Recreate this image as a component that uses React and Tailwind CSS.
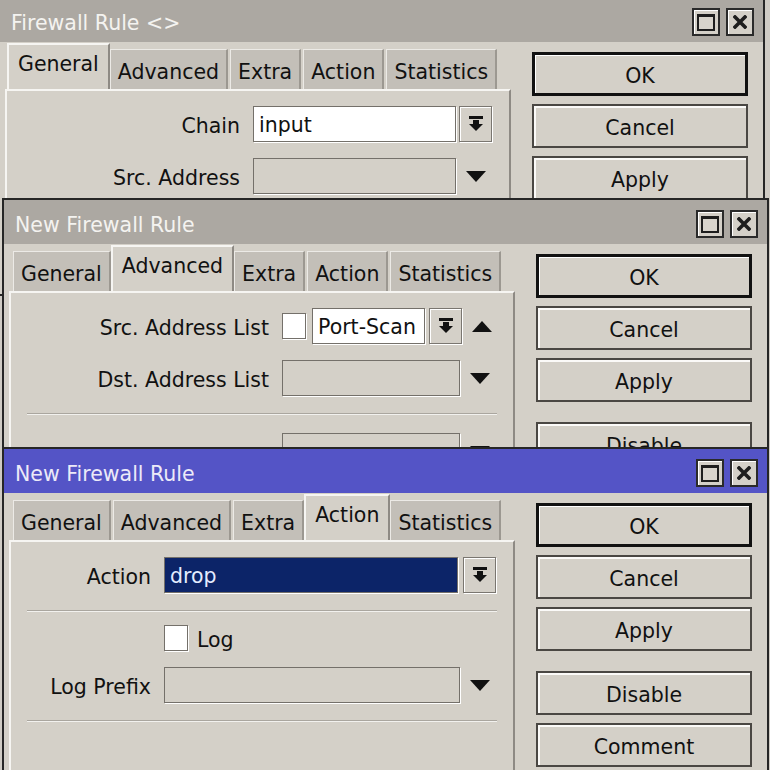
import React from "react";

function TitleButtons() {
  return (
    <div className="ml-auto flex gap-[6px] mt-[4px]">
      <div className="w-[28px] h-[28px] border-2 border-[#2a2a2a] bg-[#d4d0c8] shadow-[inset_1px_1px_0_#fff] flex items-center justify-center">
        <div className="w-[18px] h-[17px] border-2 border-t-[3px] border-[#1e1e1e] bg-[#d8d4cc]" />
      </div>
      <div className="w-[28px] h-[28px] border-2 border-[#2a2a2a] bg-[#d4d0c8] shadow-[inset_1px_1px_0_#fff] flex items-center justify-center">
        <svg width="14" height="14" viewBox="0 0 14 14">
          <path d="M2 2 L12 12 M12 2 L2 12" stroke="#1e1e1e" strokeWidth="3.6" strokeLinecap="square" />
        </svg>
      </div>
    </div>
  );
}

function Tab({ label, active }) {
  if (active) {
    return (
      <div className="relative z-10 -mx-[2px] h-[46px] px-[9px] pb-[5px] flex items-center bg-[#d4d0c8] border-t-2 border-l-2 border-[#f6f5f2] border-r-2 border-r-[#8e8a84] text-[#111]">
        {label}
      </div>
    );
  }
  return (
    <div className="h-[40px] px-[7px] pt-[5px] flex items-center bg-[#c3bfb8] border-t border-l border-[#eceae6] border-r-2 border-r-[#9c9891] text-[#111]">
      {label}
    </div>
  );
}

function DropBtn() {
  return (
    <div className="w-[33px] h-[36px] shrink-0 bg-[#d4d0c8] border border-[#7a7670] shadow-[inset_1px_1px_0_#fff,1px_1px_0_#fff] flex items-center justify-center">
      <svg width="14" height="16" viewBox="0 0 14 16">
        <rect x="0" y="0" width="14" height="3" fill="#111" />
        <rect x="4" y="4" width="6" height="5" fill="#111" />
        <polygon points="0,8 14,8 7,15" fill="#111" />
      </svg>
    </div>
  );
}

function Tri({ up }) {
  return (
    <div className="w-[33px] flex justify-center">
      <svg width="20" height="11" viewBox="0 0 20 11">
        {up ? (
          <polygon points="0,11 20,11 10,0" fill="#111" />
        ) : (
          <polygon points="0,0 20,0 10,11" fill="#111" />
        )}
      </svg>
    </div>
  );
}

function Row({ labelW, label, children, slot, className = "" }) {
  return (
    <div className={`flex items-center h-[36px] pr-[17px] ${className}`}>
      <div className={`${labelW} shrink-0 text-right whitespace-nowrap text-[#111] leading-[24px] pt-[4px]`}>{label}</div>
      <div className="ml-[13px] flex-1 flex items-center h-full">{children}</div>
      <div className="w-[36px] h-full shrink-0 flex items-center justify-end">{slot}</div>
    </div>
  );
}

function Field({ value, white, selected, className = "" }) {
  const bg = selected ? "bg-[#0c2468] text-[#e4ecff]" : white ? "bg-white text-[#111]" : "bg-[#d4d0c8]";
  return (
    <div className={`h-[36px] border border-[#74706a] shadow-[1px_1px_0_#fff] flex items-center px-[5px] pt-[3px] ${bg} ${className}`}>
      {value}
    </div>
  );
}

function Check() {
  return <div className="w-[24px] h-[26px] shrink-0 bg-white border border-[#74706a] shadow-[1px_1px_0_#fff]" />;
}

function Sep({ className = "" }) {
  return <div className={`ml-[16px] mr-[16px] h-[2px] border-t border-[#aaa69f] border-b border-b-[#f2f1ee] ${className}`} />;
}

function Btn({ label, primary, className = "" }) {
  return (
    <div
      className={`h-[44px] shrink-0 flex items-center justify-center pt-[4px] bg-[#d4d0c8] text-[#111] ${
        primary
          ? "border-[3px] border-[#111] shadow-[inset_1px_1px_0_#fff]"
          : "border-2 border-[#4a4743] shadow-[inset_2px_2px_0_#fbfaf8]"
      } ${className}`}
    >
      {label}
    </div>
  );
}

const TABS = ["General", "Advanced", "Extra", "Action", "Statistics"];

function Win({ pos, title, blue, activeTab, buttons, children }) {
  return (
    <div className={`absolute w-[767px] border-2 border-[#262626] bg-[#d4d0c8] overflow-hidden flex flex-col ${pos}`}>
      <div
        className={`h-[44px] shrink-0 flex items-center pl-[11px] pr-[9px] ${
          blue ? "bg-[#5454c6] text-[#eceaf8]" : "bg-[#aca8a2] text-[#f4f3f0]"
        }`}
      >
        <span className="pt-[7px]">{title}</span>
        <TitleButtons />
      </div>
      <div className="flex flex-1 pl-[5px]">
        <div className="w-[506px] flex flex-col">
          <div className="h-[47px] flex items-end pl-[4px] gap-[2px]">
            {TABS.map((t) => (
              <Tab key={t} label={t} active={t === activeTab} />
            ))}
          </div>
          <div className="flex-1 border-t-2 border-l-2 border-[#f6f5f2] border-r-2 border-r-[#8e8a84] pt-[15px] flex flex-col">
            {children}
          </div>
        </div>
        <div className="w-[216px] ml-[21px] pt-[10px] flex flex-col gap-[8px]">
          {buttons.map((b, i) => (
            <Btn key={b} label={b} primary={i === 0} className={b === "Disable" ? "mt-[12px]" : ""} />
          ))}
        </div>
      </div>
    </div>
  );
}

export default function App() {
  return (
    <div className="relative w-[770px] h-[770px] overflow-hidden bg-[#cfcbc4] font-['DejaVu_Sans',sans-serif] text-[20.5px] leading-none">
      <Win
        pos="left-[-2px] top-[-4px] h-[300px]"
        title="Firewall Rule <>"
        activeTab="General"
        buttons={["OK", "Cancel", "Apply", "Disable", "Comment"]}
      >
        <Row labelW="w-[233px]" label="Chain" slot={<DropBtn />}>
          <Field white value="input" className="flex-1" />
        </Row>
        <Row labelW="w-[233px]" label="Src. Address" className="mt-[16px]" slot={<Tri />}>
          <Field className="flex-1" />
        </Row>
        <Row labelW="w-[233px]" label="Dst. Address" className="mt-[16px]" slot={<Tri />}>
          <Field className="flex-1" />
        </Row>
      </Win>

      <Win
        pos="left-[2px] top-[198px] h-[320px]"
        title="New Firewall Rule"
        activeTab="Advanced"
        buttons={["OK", "Cancel", "Apply", "Disable", "Comment"]}
      >
        <Row labelW="w-[258px]" label="Src. Address List" slot={<Tri up />}>
          <Check />
          <Field white value="Port-Scan" className="ml-[6px] w-[113px] shrink-0" />
          <div className="ml-[4px]">
            <DropBtn />
          </div>
        </Row>
        <Row labelW="w-[258px]" label="Dst. Address List" className="mt-[16px]" slot={<Tri />}>
          <Field className="flex-1" />
        </Row>
        <Sep className="mt-[17px]" />
        <Row labelW="w-[258px]" label="" className="mt-[18px]" slot={<Tri />}>
          <Field className="flex-1" />
        </Row>
      </Win>

      <Win
        pos="left-[2px] top-[447px] h-[360px]"
        title="New Firewall Rule"
        blue
        activeTab="Action"
        buttons={["OK", "Cancel", "Apply", "Disable", "Comment"]}
      >
        <Row labelW="w-[140px]" label="Action" slot={<DropBtn />}>
          <Field selected value="drop" className="flex-1 mr-[2px]" />
        </Row>
        <Sep className="mt-[17px]" />
        <Row labelW="w-[140px]" label="" className="mt-[8px]">
          <Check />
          <span className="ml-[9px] text-[#111] leading-[24px] pt-[4px]">Log</span>
        </Row>
        <Row labelW="w-[140px]" label="Log Prefix" className="mt-[11px]" slot={<Tri />}>
          <Field className="flex-1" />
        </Row>
        <Sep className="mt-[17px]" />
      </Win>
    </div>
  );
}
